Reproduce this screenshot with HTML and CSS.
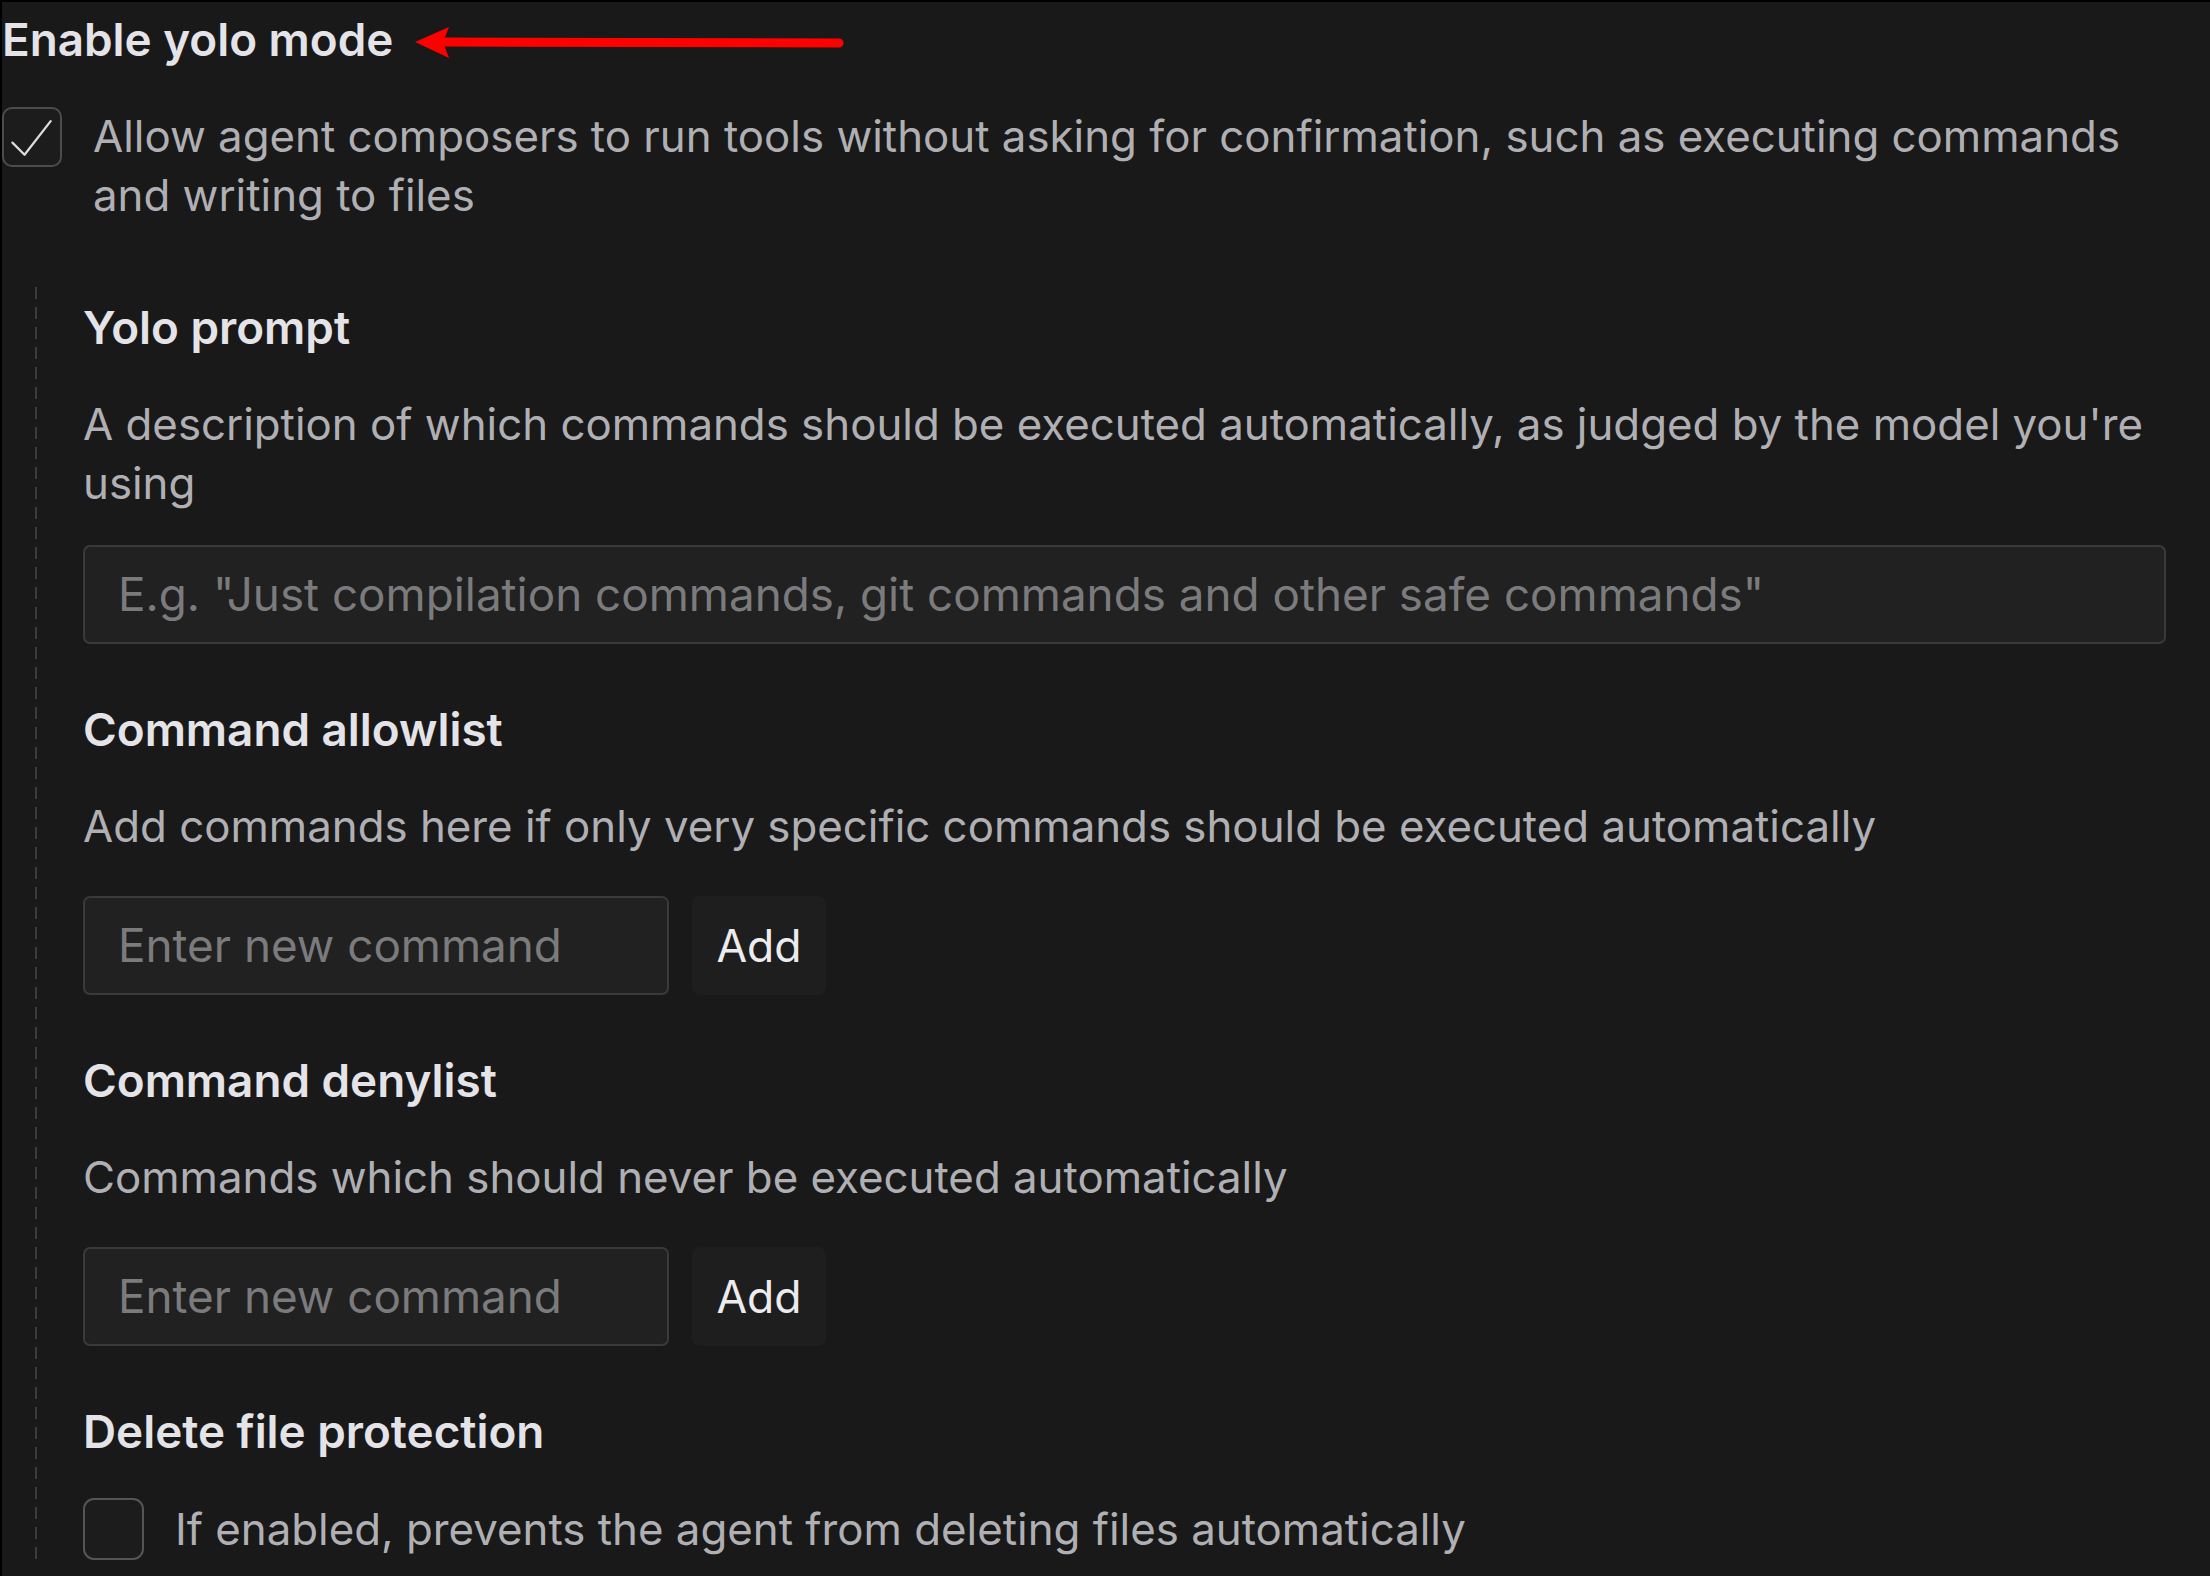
FILE: index.html
```html
<!DOCTYPE html>
<html lang="en">
<head>
<meta charset="utf-8">
<title>Enable yolo mode</title>
<link rel="stylesheet" href="styles.css">
</head>
<body>
<div class="panel">
  <h1 class="title">Enable yolo mode</h1>
  <svg class="annotation" width="440" height="40" viewBox="0 0 440 40" aria-hidden="true">
    <line x1="30" y1="20" x2="424" y2="21" stroke="#ff0000" stroke-width="9" stroke-linecap="round"/>
    <polygon points="0,20 34,5 28,20 34,36" fill="#ff0000"/>
  </svg>

  <label class="check-row">
    <span class="checkbox checked">
      <svg viewBox="0 0 60 60" width="58" height="58"><polyline points="9,36 22,49 50,13" fill="none" stroke="#dcdcdf" stroke-width="2.4" stroke-linecap="round" stroke-linejoin="round"/></svg>
    </span>
    <span class="check-text">Allow agent composers to run tools without asking for confirmation, such as executing commands and writing to files</span>
  </label>

  <div class="nested">
    <section class="setting">
      <h2 class="setting-title">Yolo prompt</h2>
      <p class="setting-desc">A description of which commands should be executed automatically, as judged by the model you're using</p>
      <div class="field wide">E.g. "Just compilation commands, git commands and other safe commands"</div>
    </section>

    <section class="setting">
      <h2 class="setting-title">Command allowlist</h2>
      <p class="setting-desc">Add commands here if only very specific commands should be executed automatically</p>
      <div class="add-row">
        <div class="field narrow">Enter new command</div>
        <button class="add-btn">Add</button>
      </div>
    </section>

    <section class="setting">
      <h2 class="setting-title">Command denylist</h2>
      <p class="setting-desc">Commands which should never be executed automatically</p>
      <div class="add-row">
        <div class="field narrow">Enter new command</div>
        <button class="add-btn">Add</button>
      </div>
    </section>

    <section class="setting">
      <h2 class="setting-title">Delete file protection</h2>
      <label class="check-row inner">
        <span class="checkbox"></span>
        <span class="check-text">If enabled, prevents the agent from deleting files automatically</span>
      </label>
    </section>
  </div>
</div>
</body>
</html>
```

FILE: styles.css
```css
html, body {
  margin: 0;
  padding: 0;
  background: #000;
}

body {
  font-family: Inter, "Liberation Sans", sans-serif;
  -webkit-font-smoothing: antialiased;
}

.panel {
  position: relative;
  margin: 2px 0 0 2px;
  height: 1574px;
  background: #191919;
  padding: 0 44px 0 0;
  box-sizing: border-box;
  overflow: hidden;
}

.title {
  margin: 0;
  padding-top: 8px;
  font-size: 45.8px;
  line-height: 59px;
  font-weight: 600;
  color: #e4e4e8;
}

.annotation {
  position: absolute;
  left: 413px;
  top: 20px;
}

.check-row {
  display: flex;
  align-items: flex-start;
  gap: 31px;
  margin-top: 38px;
}

.checkbox {
  flex: none;
  width: 60px;
  height: 60px;
  margin-top: 0;
  box-sizing: border-box;
  border: 2px solid #4c4c4e;
  border-radius: 10px;
  background: #1c1c1c;
  display: flex;
  align-items: center;
  justify-content: center;
}

.checkbox svg {
  display: block;
}

.check-text {
  font-size: 43.8px;
  line-height: 59px;
  color: #b0b0b4;
}

.nested {
  margin: 62px 0 0 33px;
  padding: 11px 0 0 48px;
  background-image: linear-gradient(to bottom, #3c3c3e 12px, transparent 12px);
  background-size: 2px 20px;
  background-repeat: repeat-y;
  background-position: 0 0;
}

.setting + .setting {
  margin-top: 56px;
}

.setting-title {
  margin: 0;
  font-size: 45.8px;
  line-height: 59px;
  font-weight: 600;
  color: #e4e4e8;
}

.setting-desc {
  margin: 38px 0 0;
  font-size: 43.8px;
  line-height: 59px;
  color: #b0b0b4;
}

.field {
  box-sizing: border-box;
  height: 99px;
  padding: 0 33px;
  display: flex;
  align-items: center;
  background: #212121;
  border: 2px solid #3a3a3a;
  border-radius: 7px;
  font-size: 45.8px;
  color: #7b7b7d;
  white-space: nowrap;
}

.wide {
  margin-top: 32px;
}

.add-row {
  display: flex;
  gap: 23px;
  margin-top: 40px;
}

.narrow {
  width: 586px;
}

.add-btn {
  width: 134px;
  height: 99px;
  border: none;
  border-radius: 8px;
  background: #1e1e1e;
  color: #ececee;
  font-family: inherit;
  font-size: 44.5px;
  padding: 0;
}

.check-row.inner {
  margin-top: 39px;
  gap: 31px;
}

.check-row.inner .checkbox {
  width: 61px;
  height: 62px;
  border-color: #555557;
  border-radius: 11px;
  margin-top: -2px;
}
```
